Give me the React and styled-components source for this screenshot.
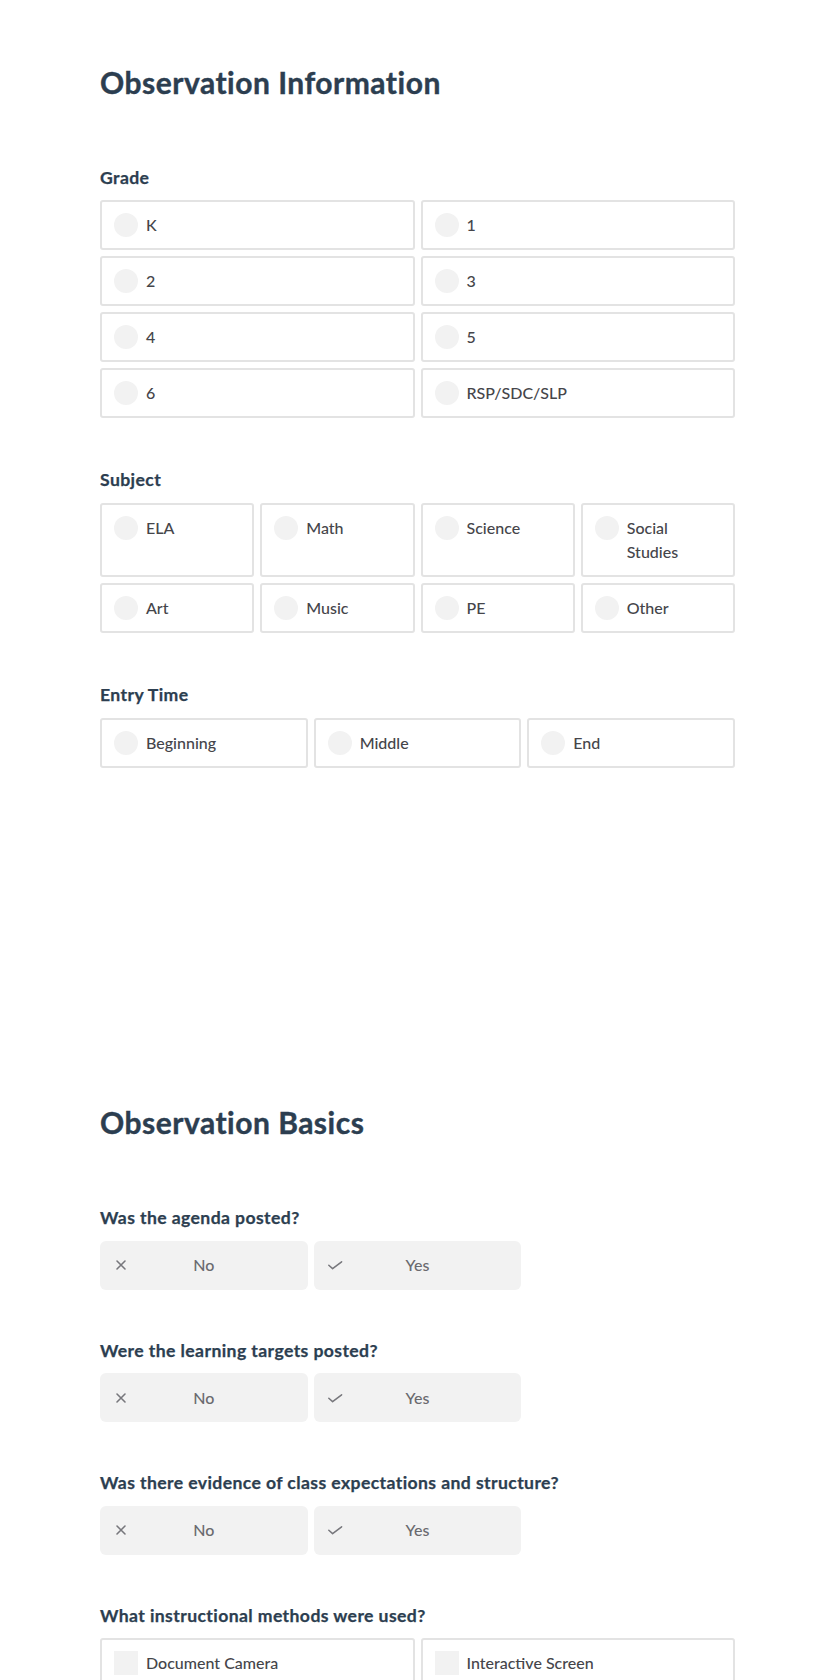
import React from "react";
import styled, { createGlobalStyle } from "styled-components";

const GlobalStyle = createGlobalStyle`
  html, body {
    margin: 0;
    padding: 0;
    background: #ffffff;
  }
  body {
    font-family: Lato, "Open Sans", "Liberation Sans", sans-serif;
    -webkit-font-smoothing: antialiased;
  }
  * { box-sizing: border-box; }
`;

const Page = styled.main`
  width: 635px;
  margin-left: 100px;
  padding-top: 63.7px;
  padding-bottom: 80px;
`;

const Section = styled.section`
  & + & {
    margin-top: 336.5px;
  }
`;

const SectionTitle = styled.h1`
  margin: 0 0 67px;
  font-size: 30px;
  line-height: 1.2;
  font-weight: 700;
  letter-spacing: 0.5px;
  -webkit-text-stroke: 0.4px #2c3e50;
  color: #2c3e50;
`;

const Question = styled.fieldset`
  margin: 0 0 ${(p) => (p.$compact ? "50px" : "51px")};
  padding: 0;
  border: 0;
  min-width: 0;
`;

const Label = styled.legend`
  display: block;
  padding: 0;
  margin: 0 0 12.5px;
  font-size: 17.6px;
  line-height: 1.2;
  font-weight: 700;
  letter-spacing: 0.4px;
  -webkit-text-stroke: 0.25px #2c3e50;
  color: #2c3e50;
`;

const Choices = styled.div`
  display: grid;
  grid-template-columns: repeat(${(p) => p.$cols}, minmax(0, 1fr));
  gap: 6px;
`;

const Option = styled.label`
  display: flex;
  align-items: flex-start;
  gap: 8px;
  padding: 11px 12px;
  border: 2px solid #e3e3e3;
  border-radius: 3px;
  background: #ffffff;
  font-size: 16px;
  line-height: 24px;
  font-weight: 500;
  color: #45454a;
  cursor: pointer;
`;

const Marker = styled.span`
  flex: 0 0 24px;
  width: 24px;
  height: 24px;
  background: #f2f2f2;
  border-radius: ${(p) => (p.$square ? "0" : "50%")};
`;

const OptionText = styled.span`
  min-width: 0;
`;

const ToggleButton = styled.button`
  display: grid;
  grid-template-columns: 40px 1fr 40px;
  align-items: center;
  height: 49px;
  padding: 0;
  border: 0;
  border-radius: 6px;
  background: #f2f2f2;
  font-family: inherit;
  font-size: 16px;
  line-height: 24px;
  font-weight: 500;
  color: #6a6a6f;
  cursor: pointer;
`;

const IconSlot = styled.span`
  display: flex;
  align-items: center;
  justify-content: center;
  padding-left: 2px;
  color: #77777c;
`;

const ButtonText = styled.span`
  text-align: center;
`;

const CrossIcon = () => (
  <svg width="16" height="16" viewBox="0 0 16 16" fill="none" stroke="currentColor" strokeWidth="1.6" strokeLinecap="round">
    <path d="M4 4l8 8M12 4l-8 8" />
  </svg>
);

const CheckIcon = () => (
  <svg width="16" height="16" viewBox="0 0 16 16" fill="none" stroke="currentColor" strokeWidth="1.5" strokeLinecap="round" strokeLinejoin="round">
    <path d="M1.8 8.2l3.8 3.4L14.6 4.8" />
  </svg>
);

const ChoiceQuestion = ({ label, cols, options, square }) => (
  <Question>
    <Label>{label}</Label>
    <Choices $cols={cols}>
      {options.map((o) => (
        <Option key={o}>
          <Marker $square={square} />
          <OptionText>{o}</OptionText>
        </Option>
      ))}
    </Choices>
  </Question>
);

const YesNoQuestion = ({ label }) => (
  <Question $compact>
    <Label>{label}</Label>
    <Choices $cols={3}>
      <ToggleButton type="button">
        <IconSlot><CrossIcon /></IconSlot>
        <ButtonText>No</ButtonText>
        <span />
      </ToggleButton>
      <ToggleButton type="button">
        <IconSlot><CheckIcon /></IconSlot>
        <ButtonText>Yes</ButtonText>
        <span />
      </ToggleButton>
    </Choices>
  </Question>
);

export default function App() {
  return (
    <>
      <GlobalStyle />
      <Page>
        <Section>
          <SectionTitle>Observation Information</SectionTitle>
          <ChoiceQuestion
            label="Grade"
            cols={2}
            options={["K", "1", "2", "3", "4", "5", "6", "RSP/SDC/SLP"]}
          />
          <ChoiceQuestion
            label="Subject"
            cols={4}
            options={["ELA", "Math", "Science", "Social Studies", "Art", "Music", "PE", "Other"]}
          />
          <ChoiceQuestion
            label="Entry Time"
            cols={3}
            options={["Beginning", "Middle", "End"]}
          />
        </Section>
        <Section>
          <SectionTitle>Observation Basics</SectionTitle>
          <YesNoQuestion label="Was the agenda posted?" />
          <YesNoQuestion label="Were the learning targets posted?" />
          <YesNoQuestion label="Was there evidence of class expectations and structure?" />
          <ChoiceQuestion
            label="What instructional methods were used?"
            cols={2}
            square
            options={[
              "Document Camera",
              "Interactive Screen",
              "Small Group Instruction",
              "Whole Group Instruction",
              "Independent Work",
              "Partner Work",
            ]}
          />
        </Section>
      </Page>
    </>
  );
}
